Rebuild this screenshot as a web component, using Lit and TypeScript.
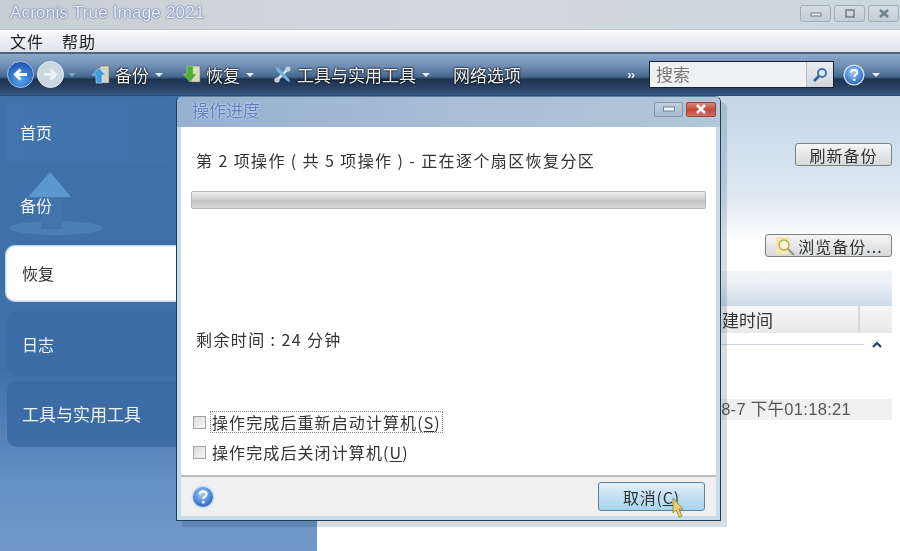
import { LitElement, html, css, svg } from 'lit';
import { customElement } from 'lit/decorators.js';

const caret = html`<span class="caret"></span>`;

const helpIcon = (size: number) => html`
  <svg width=${size} height=${size} viewBox="0 0 24 24">
    <defs>
      <radialGradient id="hg${size}" cx="45%" cy="35%" r="70%">
        <stop offset="0" stop-color="#a9cdf2" />
        <stop offset="0.6" stop-color="#4f8bd6" />
        <stop offset="1" stop-color="#2a62b4" />
      </radialGradient>
    </defs>
    <circle cx="12" cy="12" r="11.5" fill="#cfe0f4" />
    <circle cx="12" cy="12" r="10" fill="url(#hg${size})" />
    <path d="M8.6 9.4c.2-2 1.6-3 3.5-3 2 0 3.4 1.1 3.4 2.8 0 2.4-3.2 2.5-3.2 4.9" fill="none" stroke="#fff" stroke-width="2.2" />
    <circle cx="12.3" cy="17.2" r="1.4" fill="#fff" />
  </svg>
`;

@customElement('app-root')
export class AppRoot extends LitElement {
  static styles = css`
    :host {
      display: block;
      position: relative;
      width: 900px;
      height: 551px;
      overflow: hidden;
      background: #fff;
      font-family: 'Noto Sans CJK SC', 'Liberation Sans', sans-serif;
      color: #2a2a2a;
      filter: blur(0.55px);
    }

    .titlebar {
      height: 30px;
      box-sizing: border-box;
      display: flex;
      align-items: center;
      justify-content: space-between;
      padding: 0 1px 3px 10px;
      background: linear-gradient(90deg, #c6ced5 0%, #d3dadf 50%, #cbd6dd 100%);
      border-bottom: 1px solid #b9c6d6;
    }

    .app-title {
      font-family: 'Liberation Sans', sans-serif;
      font-size: 17px;
      letter-spacing: 0.2px;
      color: #eaf0fa;
      text-shadow: 0 0 2px #4f649c, 0 0 1px #4f649c;
    }

    .win-btns {
      display: flex;
      gap: 3px;
    }

    .win-btn {
      width: 31px;
      height: 17px;
      box-sizing: border-box;
      border: 1px solid #9fb0bd;
      border-radius: 3px;
      background: linear-gradient(#d5dde3, #c3ced7);
      display: flex;
      align-items: center;
      justify-content: center;
    }

    .menubar {
      height: 22px;
      box-sizing: border-box;
      display: flex;
      align-items: center;
      gap: 18px;
      padding-left: 10px;
      font-size: 16px;
      letter-spacing: 1px;
      background: linear-gradient(#fbfbfc, #dde1ea);
      color: #222;
    }

    .toolbar {
      height: 44px;
      box-sizing: border-box;
      display: flex;
      align-items: center;
      padding: 0 0 0 7px;
      border-top: 2px solid #4a6484;
      border-bottom: 1px solid #2c4870;
      background: linear-gradient(#8eaacb 0%, #6d8db3 30%, #48698f 55%, #1c3350 62%, #2b4468 85%, #3a5a85 100%);
      color: #f0f0f0;
      font-size: 17px;
    }

    .nav {
      display: flex;
      align-items: center;
      gap: 3px;
      margin-right: 16px;
    }

    .tool {
      display: flex;
      align-items: center;
      gap: 5px;
      text-shadow: 0 0 2px #000, 0 0 2px #000;
    }

    .caret {
      display: inline-block;
      width: 0;
      height: 0;
      margin-left: 1px;
      border-left: 4px solid transparent;
      border-right: 4px solid transparent;
      border-top: 4px solid #e8eef5;
    }

    .gap-a {
      margin-right: 20px;
    }

    .gap-b {
      margin-right: 19px;
    }

    .gap-c {
      margin-right: 23px;
    }

    .more {
      margin-left: auto;
      margin-right: 15px;
      font-size: 13px;
      font-weight: 700;
      letter-spacing: -1px;
      font-family: 'Liberation Sans', sans-serif;
    }

    .search {
      width: 185px;
      height: 27px;
      box-sizing: border-box;
      display: flex;
      border: 1px solid #16202e;
      background: #eef0f1;
      color: #777;
      font-size: 17px;
      margin-right: 9px;
    }

    .search-text {
      flex: 1;
      padding-left: 6px;
      line-height: 24px;
    }

    .search-btn {
      width: 26px;
      display: flex;
      align-items: center;
      justify-content: center;
      border-left: 1px solid #b8bcc2;
      background: linear-gradient(#eceef0, #cfd4da);
    }

    .help-wrap {
      display: flex;
      align-items: center;
      gap: 6px;
      padding-right: 20px;
    }

    .body {
      display: flex;
      height: 455px;
    }

    .sidebar {
      width: 317px;
      box-sizing: border-box;
      padding: 4px 0 0 5px;
      display: flex;
      flex-direction: column;
      background: linear-gradient(#3e70aa 0%, #3e70aa 60%, #6590c4 85%, #7299c9 100%);
      color: #eef3fa;
      font-size: 16px;
    }

    .side-item {
      display: flex;
      align-items: center;
      padding-left: 17px;
      border-radius: 10px 0 0 10px;
      position: relative;
    }

    .home {
      height: 64px;
      padding-left: 15px;
      background: linear-gradient(90deg, #4275b0, #3f71ab 60%, #3e70aa);
    }

    .backup {
      height: 81px;
      padding-left: 15px;
    }

    .backup svg {
      position: absolute;
      left: 4px;
      top: 3px;
      overflow: visible;
    }

    .backup span {
      position: relative;
    }

    .restore {
      height: 57px;
      padding-bottom: 2px;
      box-sizing: border-box;
      background: #fff;
      color: #333;
      box-shadow: inset 0 0 3px #6d8fb8;
    }

    .log {
      height: 65px;
      margin: 9px 0 5px 2px;
      padding-left: 15px;
      background: #3c6ca6;
    }

    .utils {
      height: 66px;
      margin-left: 2px;
      padding: 0 0 2px 15px;
      box-sizing: border-box;
      background: #3c6ca6;
      font-size: 17px;
    }

    .main {
      flex: 1;
      display: flex;
      flex-direction: column;
      align-items: flex-end;
      padding: 47px 8px 0 0;
      background: linear-gradient(#c3d5e8 0%, #dde8f2 22%, #ffffff 32%);
    }

    .btn {
      height: 23px;
      box-sizing: border-box;
      display: flex;
      align-items: center;
      justify-content: center;
      border: 1px solid #7d8186;
      border-radius: 3px;
      background: linear-gradient(#f6f6f6, #d6d8da);
      font-size: 16px;
      color: #333;
    }

    .refresh {
      width: 97px;
      letter-spacing: 1px;
    }

    .browse {
      width: 127px;
      gap: 2px;
      margin-top: 68px;
      letter-spacing: 1px;
    }

    .band {
      width: 100%;
      height: 35px;
      margin-top: 14px;
      background: linear-gradient(#f3f5f8 0%, #eef2f6 30%, #ccdbea 100%);
    }

    .thead {
      width: 100%;
      height: 27px;
      box-sizing: border-box;
      display: flex;
      background: linear-gradient(#f6f6f6, #e9e9e9);
      font-size: 17px;
      color: #333;
    }

    .th-name {
      flex: 1;
      text-align: right;
      padding-right: 85px;
      line-height: 27px;
      border-right: 2px solid #d8d8d8;
    }

    .th-end {
      width: 32px;
    }

    .group {
      width: 100%;
      height: 26px;
      display: flex;
      align-items: center;
      gap: 8px;
      box-sizing: border-box;
      padding: 0 10px 4px 0;
    }

    .group i {
      flex: 1;
      height: 1px;
      background: #c9d3e4;
    }

    .row {
      width: 100%;
      height: 21px;
      margin-top: 40px;
      box-sizing: border-box;
      padding-right: 41px;
      text-align: right;
      background: #f0f0f0;
      font-family: 'Liberation Sans', 'Noto Sans CJK SC', sans-serif;
      font-size: 16.5px;
      letter-spacing: 0.3px;
      line-height: 21px;
      color: #555;
      white-space: nowrap;
    }

    .dialog {
      position: absolute;
      left: 176px;
      top: 96px;
      width: 545px;
      height: 425px;
      box-sizing: border-box;
      display: flex;
      flex-direction: column;
      border: 1px solid #1c3f55;
      border-top-color: #5f7f9f;
      border-radius: 6px 6px 0 0;
      background: #c6dcea;
      box-shadow: 6px 6px 0 rgba(40, 60, 90, 0.18);
      padding: 0 4px 4px;
    }

    .dlg-title {
      height: 30px;
      margin: 0 -4px;
      padding: 0 4px 6px 15px;
      box-sizing: border-box;
      display: flex;
      align-items: center;
      justify-content: space-between;
      flex-shrink: 0;
      border-radius: 5px 5px 0 0;
      background: linear-gradient(90deg, #95b0cf 0%, #a9bfd7 55%, #b3c6da 100%);
      color: #5f80c4;
      font-size: 17px;
      text-shadow: 0 0 2px #eef3ff;
    }

    .dlg-btns {
      display: flex;
      gap: 3px;
    }

    .dlg-btn {
      width: 29px;
      height: 15px;
      box-sizing: border-box;
      border: 1px solid #7d95ae;
      border-radius: 2px;
      display: flex;
      align-items: center;
      justify-content: center;
      background: linear-gradient(#c2d0de, #a6bbd0);
    }

    .dlg-btn.close {
      width: 30px;
      border-color: #93463c;
      background: linear-gradient(#d8897a, #c2493a 55%, #d5705f);
    }

    .dlg-body {
      flex: 1;
      display: flex;
      flex-direction: column;
      padding: 0 10px;
      background: #fff;
      font-size: 16px;
      letter-spacing: 1.4px;
      color: #333;
    }

    .op-line {
      margin: 22px 0 0 5px;
      line-height: 23px;
      white-space: pre;
    }

    .progress {
      height: 18px;
      margin-top: 19px;
      box-sizing: border-box;
      border: 1px solid #b5b5b5;
      border-radius: 2px;
      background: linear-gradient(#ededed, #cfcfcf 45%, #c2c2c2 55%, #d8d8d8);
    }

    .remain {
      margin: 119px 0 0 5px;
      line-height: 23px;
      white-space: pre;
    }

    .checks {
      display: flex;
      flex-direction: column;
      gap: 8px;
      margin: 60px 0 0 2px;
    }

    .check {
      height: 22px;
      display: flex;
      align-items: center;
      gap: 4px;
    }

    .box {
      width: 13px;
      height: 13px;
      box-sizing: border-box;
      border: 1px solid #a3a3a3;
      background: linear-gradient(135deg, #dcdcdc, #f6f6f6);
    }

    .check label {
      padding: 0 1px;
      line-height: 20px;
      border: 1px solid transparent;
      letter-spacing: 1.1px;
    }

    .check.focus label {
      border: 1px dotted #8a8a8a;
    }

    .check u {
      text-underline-offset: 2px;
    }

    .dlg-foot {
      height: 39px;
      flex-shrink: 0;
      display: flex;
      align-items: center;
      justify-content: space-between;
      padding: 0 11px 0 10px;
      border-top: 2px solid #bcbcbc;
      background: #f0f0f0;
    }

    .help-foot {
      display: flex;
    }

    .cancel {
      width: 107px;
      height: 29px;
      box-sizing: border-box;
      display: flex;
      align-items: center;
      justify-content: center;
      border: 1px solid #5b8296;
      border-radius: 3px;
      background: linear-gradient(#e2f1fa, #c3e0f2 50%, #a9d3ec);
      font-size: 16px;
      letter-spacing: 0.8px;
      color: #333;
    }

    .cursor {
      position: absolute;
      left: 671px;
      top: 497px;
    }
  `;

  private winIcon(kind: string) {
    const c = '#6f7f8d';
    if (kind === 'min') return svg`<rect x="1" y="4" width="10" height="3" fill="#eef2f5" stroke=${c} />`;
    if (kind === 'max') return svg`<rect x="2" y="1" width="8" height="7" fill="none" stroke=${c} stroke-width="1.5" />`;
    return svg`<path d="M2 1l8 7M10 1L2 8" stroke=${c} stroke-width="2.4" />`;
  }

  render() {
    return html`
      <div class="titlebar">
        <span class="app-title">Acronis True Image 2021</span>
        <div class="win-btns">
          ${['min', 'max', 'close'].map(
            (k) => html`<div class="win-btn"><svg width="12" height="9" viewBox="0 0 12 9">${this.winIcon(k)}</svg></div>`
          )}
        </div>
      </div>

      <div class="menubar"><span>文件</span><span>帮助</span></div>

      <div class="toolbar">
        <div class="nav">
          <svg width="27" height="27" viewBox="0 0 27 27">
            <defs>
              <radialGradient id="bk" cx="50%" cy="70%" r="70%">
                <stop offset="0" stop-color="#58a6ee" />
                <stop offset="1" stop-color="#1c4fb0" />
              </radialGradient>
            </defs>
            <circle cx="13.5" cy="13.5" r="13" fill="url(#bk)" stroke="#a8c4e4" />
            <path d="M20 13.5H9M13.5 8.5l-5 5 5 5" fill="none" stroke="#fff" stroke-width="3" />
          </svg>
          <svg width="27" height="27" viewBox="0 0 27 27">
            <circle cx="13.5" cy="13.5" r="13" fill="#ccd6df" stroke="#e8eef3" />
            <path d="M7 13.5h11M13.5 8.5l5 5-5 5" fill="none" stroke="#eef2f5" stroke-width="3" />
          </svg>
          <span class="caret" style="border-top-color:#7fa3cc"></span>
        </div>
        <div class="tool gap-a">
          <svg width="18" height="20" viewBox="0 0 18 20">
            <rect x="8" y="1" width="9" height="17" fill="#d8d4c4" stroke="#77725f" stroke-width="0.6" />
            <path d="M7 3l6.5 7H10v8H4v-8H.5z" fill="#3f9be0" stroke="#bfe1f7" stroke-width="0.6" />
          </svg>
          <span>备份</span>${caret}
        </div>
        <div class="tool gap-b">
          <svg width="18" height="20" viewBox="0 0 18 20">
            <rect x="8" y="1" width="9" height="16" fill="#d8dcc4" stroke="#77725f" stroke-width="0.6" />
            <path d="M4 1h6v8h3.5L7 17 .5 9H4z" fill="#4fae2e" stroke="#a7dc8a" stroke-width="0.6" />
          </svg>
          <span>恢复</span>${caret}
        </div>
        <div class="tool gap-c">
          <svg width="19" height="19" viewBox="0 0 19 19">
            <path d="M3 16L16 3" stroke="#dfe7ee" stroke-width="2.6" />
            <path d="M2 2l4 1 10 11 1 3-3-1L4 6z" fill="#6fb7e2" />
            <circle cx="15" cy="4" r="2.6" fill="#c8d2da" />
            <circle cx="4" cy="15" r="2.6" fill="#c8d2da" />
          </svg>
          <span>工具与实用工具</span>${caret}
        </div>
        <div class="tool"><span>网络选项</span></div>
        <span class="more">››</span>
        <div class="search">
          <span class="search-text">搜索</span>
          <span class="search-btn">
            <svg width="16" height="16" viewBox="0 0 16 16">
              <circle cx="10" cy="6" r="4" fill="#dceaf6" stroke="#3f78b5" stroke-width="2" />
              <path d="M7 9l-5 5" stroke="#2f5f95" stroke-width="2.6" />
            </svg>
          </span>
        </div>
        <div class="help-wrap">${helpIcon(22)}${caret}</div>
      </div>

      <div class="body">
        <div class="sidebar">
          <div class="side-item home">首页</div>
          <div class="side-item backup">
            <svg width="100" height="78" viewBox="0 0 100 78">
              <ellipse cx="47" cy="61" rx="47" ry="7" fill="#4a7fb8" />
              <path d="M32 30h21v32H32z" fill="#4474ac" />
              <path d="M19 30L41 5l21 25z" fill="#5c97cf" />
            </svg>
            <span>备份</span>
          </div>
          <div class="side-item restore">恢复</div>
          <div class="side-item log">日志</div>
          <div class="side-item utils">工具与实用工具</div>
        </div>

        <div class="main">
          <div class="btn refresh">刷新备份</div>
          <div class="btn browse">
            <svg width="22" height="20" viewBox="0 0 22 20">
              <rect x="2" y="1" width="13" height="17" fill="#f4e9a8" />
              <circle cx="10" cy="9" r="5" fill="#fbf6d8" stroke="#b9a95a" stroke-width="1.4" />
              <path d="M14 13l6 6" stroke="#9a9a9a" stroke-width="2.4" />
            </svg>
            浏览备份...
          </div>
          <div class="band"></div>
          <div class="thead">
            <div class="th-name">创建时间</div>
            <div class="th-end"></div>
          </div>
          <div class="group">
            <i></i>
            <svg width="10" height="7" viewBox="0 0 10 7"><path d="M1 6l4-4 4 4" fill="none" stroke="#1f3f7a" stroke-width="2.2" /></svg>
          </div>
          <div class="row">2020-8-7 下午01:18:21</div>
        </div>
      </div>

      <div class="dialog">
        <div class="dlg-title">
          <span>操作进度</span>
          <div class="dlg-btns">
            <div class="dlg-btn"><svg width="12" height="6" viewBox="0 0 12 6"><rect x="0.5" y="1" width="11" height="4" fill="#f2f5f8" stroke="#6f8299" /></svg></div>
            <div class="dlg-btn close"><svg width="12" height="10" viewBox="0 0 12 10"><path d="M2 1l8 8M10 1L2 9" stroke="#fff" stroke-width="2.6" /></svg></div>
          </div>
        </div>
        <div class="dlg-body">
          <div class="op-line">第 2 项操作 ( 共 5 项操作 ) - 正在逐个扇区恢复分区</div>
          <div class="progress"></div>
          <div class="remain">剩余时间 : 24 分钟</div>
          <div class="checks">
            <div class="check focus"><span class="box"></span><label>操作完成后重新启动计算机(<u>S</u>)</label></div>
            <div class="check"><span class="box"></span><label>操作完成后关闭计算机(<u>U</u>)</label></div>
          </div>
        </div>
        <div class="dlg-foot">
          <span class="help-foot">${helpIcon(24)}</span>
          <div class="cancel">取消(<u>C</u>)</div>
        </div>
      </div>

      <svg class="cursor" width="14" height="22" viewBox="0 0 14 22">
        <path d="M2 1l10 11H8l3 7-3 1-3-7-3 3z" fill="#e9cf6a" stroke="#8f7d3a" stroke-width="0.8" />
      </svg>
    `;
  }
}
